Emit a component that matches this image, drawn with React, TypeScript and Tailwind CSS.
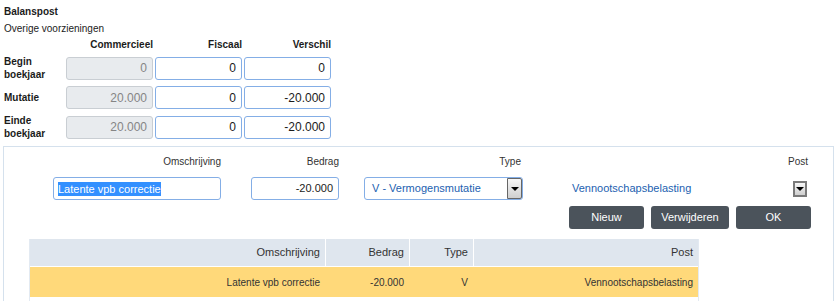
import React from 'react';

const font = "font-['Liberation_Sans',Arial,sans-serif]";

function NumInput({ value, disabled }: { value: string; disabled?: boolean }) {
  return (
    <div
      className={`w-[87px] h-[23px] rounded-[3px] border flex items-center justify-end pr-[5px] text-[12px] ${
        disabled
          ? 'bg-[#e8ebee] border-[#c9ced3] text-[#858585]'
          : 'bg-white border-[#84aee6] text-[#1b1b1b]'
      }`}
    >
      {value}
    </div>
  );
}

function DropArrow({ className }: { className: string }) {
  return (
    <div className={`flex items-center justify-center bg-gradient-to-b from-[#f7f7f7] to-[#cfcfcf] ${className}`}>
      <div className="w-0 h-0 border-l-[4px] border-r-[4px] border-t-[4px] border-l-transparent border-r-transparent border-t-black" />
    </div>
  );
}

const rows = [
  { label: ['Begin', 'boekjaar'], c: '0', f: '0', v: '0' },
  { label: ['Mutatie'], c: '20.000', f: '0', v: '-20.000' },
  { label: ['Einde', 'boekjaar'], c: '20.000', f: '0', v: '-20.000' },
];

export default function App() {
  return (
    <div className={`${font} w-[835px] h-[301px] bg-white text-[#1b1b1b] overflow-hidden`}>
      {/* Balanspost summary */}
      <div className="pl-[4px] pt-[6px]">
        <div className="text-[10px] font-bold leading-[12px]">Balanspost</div>
        <div className="text-[10px] leading-[12px] mt-[5px]">Overige voorzieningen</div>

        <div className="grid grid-cols-[60px_87px_87px_87px] gap-x-[2px] mt-[4px]">
          <div />
          <div className="text-[10px] font-bold text-right leading-[12px]">Commercieel</div>
          <div className="text-[10px] font-bold text-right leading-[12px]">Fiscaal</div>
          <div className="text-[10px] font-bold text-right leading-[12px]">Verschil</div>
        </div>

        <div className="flex flex-col gap-[5px] mt-[4px]">
          {rows.map((r) => (
            <div key={r.label.join(' ')} className="grid grid-cols-[60px_87px_87px_87px] gap-x-[2px] items-center">
              <div className="text-[10px] font-bold leading-[13px]">
                {r.label.map((l) => (
                  <div key={l}>{l}</div>
                ))}
              </div>
              <NumInput value={r.c} disabled />
              <NumInput value={r.f} />
              <NumInput value={r.v} />
            </div>
          ))}
        </div>
      </div>

      {/* Correction panel */}
      <div className="ml-[3px] mt-[6px] w-[831px] h-[160px] border-t border-l border-r border-[#d5e1ed]">
        <div className="flex pt-[9px]">
          <div className="ml-[49px] w-[168px]">
            <div className="text-[10px] leading-[12px] text-right text-[#333]">Omschrijving</div>
            <div className="mt-[9px] h-[23px] rounded-[3px] border border-[#84aee6] flex items-center pl-[4px] text-[11px]">
              <span className="bg-[#3390ff] text-white leading-[14px]">Latente vpb correctie</span>
            </div>
          </div>
          <div className="ml-[30px] w-[88px]">
            <div className="text-[10px] leading-[12px] text-right text-[#333]">Bedrag</div>
            <div className="mt-[9px] h-[23px] rounded-[3px] border border-[#84aee6] flex items-center justify-end pr-[5px] text-[11px]">
              -20.000
            </div>
          </div>
          <div className="ml-[25px] w-[159px]">
            <div className="text-[10px] leading-[12px] text-right text-[#333] pr-[2px]">Type</div>
            <div className="mt-[9px] h-[23px] rounded-[3px] border border-[#84aee6] flex items-stretch text-[11px] text-[#1d5fb0]">
              <div className="flex-1 flex items-center pl-[7px]">V - Vermogensmutatie</div>
              <DropArrow className="w-[15px] border border-[#666] rounded-r-[2px]" />
            </div>
          </div>
          <div className="ml-[49px] w-[236px]">
            <div className="text-[10px] leading-[12px] text-right text-[#333]">Post</div>
            <div className="mt-[9px] h-[23px] flex items-center justify-between text-[11px] text-[#1d5fb0]">
              <span>Vennootschapsbelasting</span>
              <DropArrow className="w-[14px] h-[16px] border-2 border-[#7a7a7a] mr-[1px]" />
            </div>
          </div>
        </div>

        <div className="flex justify-end gap-[7px] pr-[22px] mt-[6px]">
          {[
            { b: 'Nieuw', w: 'w-[75px]' },
            { b: 'Verwijderen', w: 'w-[78px]' },
            { b: 'OK', w: 'w-[75px]' },
          ].map(({ b, w }) => (
            <div
              key={b}
              className={`${w} h-[23px] rounded-[3px] bg-[#4b535b] text-white text-[11px] flex items-center justify-center`}
            >
              {b}
            </div>
          ))}
        </div>

        <div className="ml-[25px] mt-[10px] w-[670px] h-[70px] border-l border-r border-[#e3eaf2]">
          <div className="grid grid-cols-[295px_83px_63px_224px] gap-x-[1px] bg-white">
            {['Omschrijving', 'Bedrag', 'Type', 'Post'].map((h) => (
              <div key={h} className="h-[27px] bg-[#dfe6ee] flex items-center justify-end pr-[5px] text-[11px] text-[#333]">
                {h}
              </div>
            ))}
          </div>
          <div className="grid grid-cols-[295px_83px_63px_224px] gap-x-[1px] mt-[1px] bg-[#ffd97a]">
            {['Latente vpb correctie', '-20.000', 'V', 'Vennootschapsbelasting'].map((c) => (
              <div key={c} className="h-[30px] bg-[#ffd97a] flex items-center justify-end pr-[5px] text-[10px] text-[#333]">
                {c}
              </div>
            ))}
          </div>
        </div>
      </div>
    </div>
  );
}
